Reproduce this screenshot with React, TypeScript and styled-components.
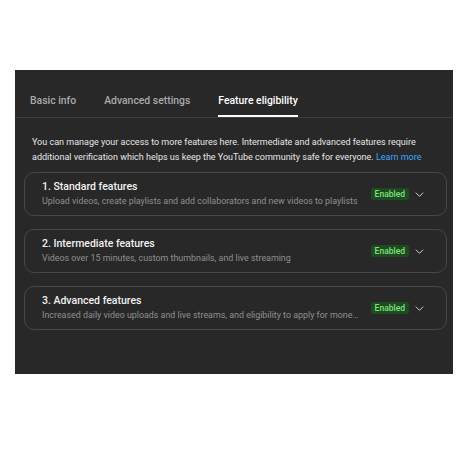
import React from 'react';
import styled, {createGlobalStyle} from 'styled-components';

const GlobalStyle = createGlobalStyle`
  body {
    margin: 0;
    background: #ffffff;
    font-family: Roboto, "Liberation Sans", sans-serif;
  }
`

const Page = styled.div`
  padding: 70px 14px 0 15px;
`

const Panel = styled.div`
  width: 438px;
  height: 304px;
  background: #282828;
  box-sizing: border-box;
`

const Tabs = styled.div`
  display: flex;
  align-items: flex-end;
  gap: 28px;
  height: 48px;
  padding-left: 15px;
  border-bottom: 1px solid #3d3d3d;
  box-sizing: border-box;
`

const Tab = styled.div<{active?: boolean}>`
  font-size: 10.4px;
  line-height: 14px;
  font-weight: 500;
  color: ${p => p.active ? '#ffffff' : '#aaaaaa'};
  padding-bottom: 7px;
  border-bottom: 2px solid ${p => p.active ? '#ffffff' : 'transparent'};
`

const Body = styled.div`
  padding: 17px 6px 0 9px;
`

const Intro = styled.p`
  margin: 0 0 7px 8px;
  font-size: 9px;
  line-height: 15px;
  color: #e6e6e6;

  a {
    color: #3ea6ff;
    text-decoration: none;
  }
`

const Cards = styled.div`
  display: flex;
  flex-direction: column;
  gap: 13px;
`

const Card = styled.div`
  display: flex;
  align-items: center;
  height: 44px;
  box-sizing: border-box;
  padding: 0 21px 0 17px;
  border: 1px solid #474747;
  border-radius: 10px;
`

const Texts = styled.div`
  flex: 1;
  min-width: 0;
`

const Title = styled.div`
  font-size: 10.5px;
  line-height: 14px;
  font-weight: 500;
  color: #f1f1f1;
`

const Desc = styled.div`
  font-size: 8.9px;
  line-height: 14px;
  color: #8f8f8f;
  white-space: nowrap;
  overflow: hidden;
  text-overflow: ellipsis;
`

const Badge = styled.span`
  margin-left: 10px;
  padding: 0 4px;
  height: 12px;
  line-height: 12px;
  font-size: 8.5px;
  font-weight: 500;
  color: #7ee07a;
  background: #1f4a22;
  border-radius: 2px;
`

const Chevron = styled.svg`
  margin-left: 5px;
  width: 11px;
  height: 11px;
`

const features = [
  {title: '1. Standard features', desc: 'Upload videos, create playlists and add collaborators and new videos to playlists'},
  {title: '2. Intermediate features', desc: 'Videos over 15 minutes, custom thumbnails, and live streaming'},
  {title: '3. Advanced features', desc: 'Increased daily video uploads and live streams, and eligibility to apply for monetization'},
];

const App: React.FC = () => {
  return (
    <Page>
      <GlobalStyle />
      <Panel>
        <Tabs>
          <Tab>Basic info</Tab>
          <Tab>Advanced settings</Tab>
          <Tab active>Feature eligibility</Tab>
        </Tabs>
        <Body>
          <Intro>
            You can manage your access to more features here. Intermediate and advanced features require
            additional verification which helps us keep the YouTube community safe for everyone. <a href="#">Learn more</a>
          </Intro>
          <Cards>
            {features.map(f => (
              <Card key={f.title}>
                <Texts>
                  <Title>{f.title}</Title>
                  <Desc>{f.desc}</Desc>
                </Texts>
                <Badge>Enabled</Badge>
                <Chevron viewBox="0 0 24 24" fill="none" stroke="#e0e0e0" strokeWidth="2">
                  <path d="M4 8l8 8 8-8" />
                </Chevron>
              </Card>
            ))}
          </Cards>
        </Body>
      </Panel>
    </Page>
  )
}

export default App;
